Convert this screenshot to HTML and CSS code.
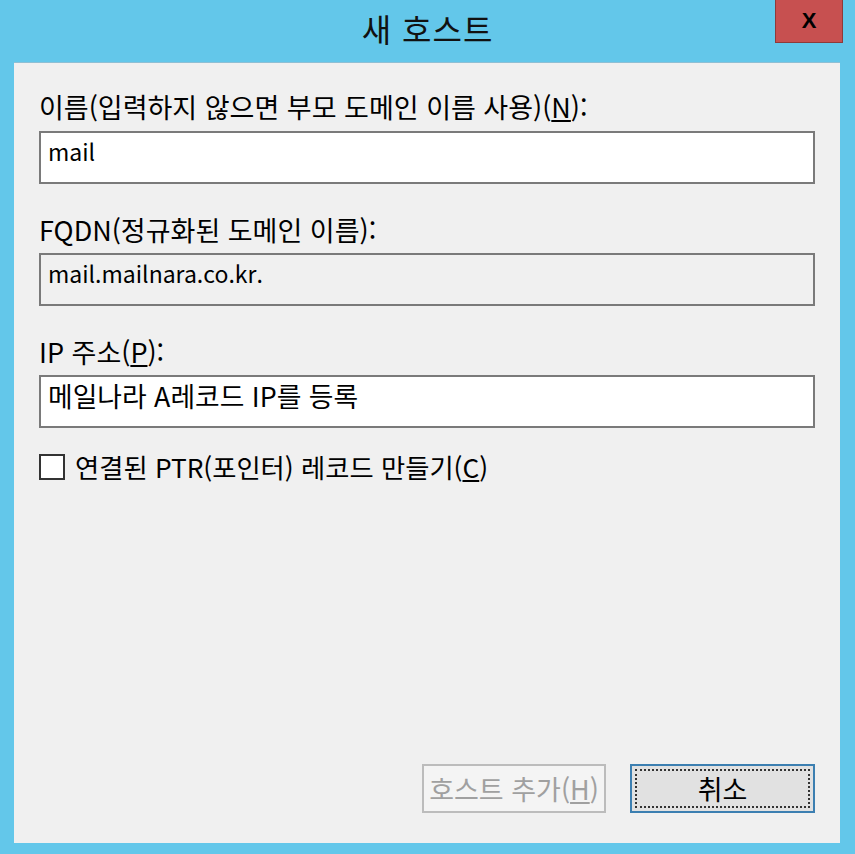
FILE: index.html
```html
<!DOCTYPE html>
<html lang="ko">
<head>
<meta charset="utf-8">
<title>새 호스트</title>
<link rel="stylesheet" href="styles.css">
</head>
<body>
<div class="window">
  <div class="titlebar">
    <div class="title">새 호스트</div>
    <div class="close">X</div>
  </div>
  <div class="panel">
    <div class="label first">이름(입력하지 않으면 부모 도메인 이름 사용)(<u>N</u>):</div>
    <div class="field latin">mail</div>
    <div class="label">FQDN(정규화된 도메인 이름):</div>
    <div class="field latin readonly">mail.mailnara.co.kr.</div>
    <div class="label">IP 주소(<u>P</u>):</div>
    <div class="field">메일나라 A레코드 IP를 등록</div>
    <div class="check">
      <span class="box"></span>
      <span class="check-text">연결된 PTR(포인터) 레코드 만들기(<u>C</u>)</span>
    </div>
    <div class="buttons">
      <div class="btn disabled">호스트 추가(<u>H</u>)</div>
      <div class="btn default"><span class="focus">취소</span></div>
    </div>
  </div>
</div>
</body>
</html>
```
FILE: styles.css
```css
html, body {
  margin: 0;
  padding: 0;
}
body {
  background: #63c7ea;
  font-family: "Noto Sans CJK KR", "Noto Sans", sans-serif;
  color: #000;
}
.window {
  width: 855px;
  height: 854px;
  display: flex;
  flex-direction: column;
  background: #63c7ea;
}
.titlebar {
  height: 62px;
  position: relative;
  display: flex;
  justify-content: center;
  align-items: center;
}
.title {
  font-size: 32px;
  line-height: 40px;
  margin-top: -6px;
  color: #111;
  letter-spacing: 1px;
}
.close {
  position: absolute;
  top: 0;
  left: 775px;
  width: 68px;
  height: 43px;
  box-sizing: border-box;
  background: #c75050;
  border: 1px solid #8e3a3a;
  border-top: none;
  font-family: "Liberation Sans", Arial, sans-serif;
  font-weight: bold;
  font-size: 22px;
  line-height: 42px;
  text-align: center;
  color: #000;
}
.panel {
  margin: 0 15px 0 14px;
  height: 781px;
  box-sizing: border-box;
  background: #f0f0f0;
  border-top: 1px solid #8fbfd4;
  padding: 29px 25px 30px 25px;
  display: flex;
  flex-direction: column;
}
.label {
  font-size: 27px;
  line-height: 30px;
  height: 30px;
  margin-top: 31px;
  margin-bottom: 8px;
  white-space: nowrap;
}
.label.first {
  margin-top: 0;
  margin-bottom: 9px;
}
.field {
  height: 53px;
  box-sizing: border-box;
  border: 2px solid #7a7a7a;
  background: #fff;
  font-size: 26.8px;
  line-height: 36px;
  padding: 1px 7px 0 7px;
  white-space: nowrap;
}
.field.latin {
  font-size: 23px;
  padding-top: 0;
}
.field.readonly {
  background: #f0f0f0;
}
.check {
  margin-top: 25px;
  display: flex;
  align-items: center;
  gap: 10px;
  height: 28px;
}
.box {
  width: 26px;
  height: 26px;
  box-sizing: border-box;
  border: 2px solid #333;
  background: #fff;
  flex: none;
}
.check-text {
  font-size: 26.3px;
  line-height: 30px;
  white-space: nowrap;
}
.buttons {
  margin-top: auto;
  display: flex;
  justify-content: flex-end;
  gap: 24px;
}
.btn {
  height: 49px;
  box-sizing: border-box;
  font-size: 27px;
  display: flex;
  align-items: center;
  justify-content: center;
  white-space: nowrap;
}
.btn.disabled {
  width: 184px;
  border: 2px solid #bcbcbc;
  background: #f4f4f4;
  color: #a0a0a0;
}
.btn.default {
  width: 185px;
  border: 2px solid #3c7fb1;
  background: #e1e1e1;
  padding: 3px;
}
.focus {
  flex: 1;
  align-self: stretch;
  border: 2px dotted #333;
  display: flex;
  align-items: center;
  justify-content: center;
  color: #000;
}
```
